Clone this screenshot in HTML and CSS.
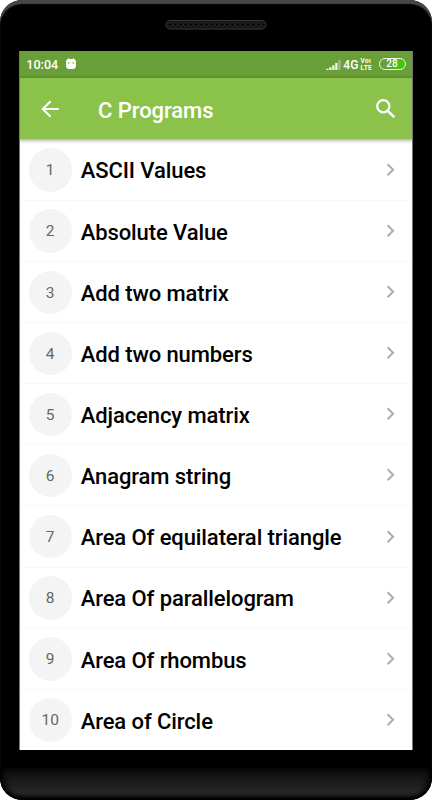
FILE: index.html
```
<!DOCTYPE html>
<html lang="en">
<head>
<meta charset="utf-8">
<title>C Programs</title>
<link rel="stylesheet" href="styles.css">
</head>
<body>
<div class="phone">
  <div class="top">
    <svg class="speaker" width="104" height="12" viewBox="0 0 104 12">
      <defs><pattern id="holes" x="3.5" y="3" width="5.2" height="6" patternUnits="userSpaceOnUse"><circle cx="2.6" cy="2.6" r="1.9" fill="#000" stroke="#303030" stroke-width=".8"/></pattern></defs>
      <rect x="2" y="1.5" width="100" height="8.5" rx="4.2" fill="#141414" stroke="#3a3a3a"/>
      <rect x="3.5" y="3" width="97" height="6" rx="3" fill="url(#holes)"/>
    </svg>
  </div>
  <main class="screen">
    <div class="status">
      <span class="time">10:04</span>
      <svg class="droid" width="12" height="13" viewBox="0 0 12 13">
        <path d="M3.3 1 4 3M8.7 1 8 3" stroke="#fff" stroke-width=".9"/>
        <path d="M1.1 4.5Q1.1 2 3.6 2h4.8q2.5 0 2.5 2.5v4.2q0 3.2-3.2 3.2H4.3q-3.2 0-3.2-3.2z" fill="#fff"/>
        <path d="M1.5 5.9h9" stroke="#d8e8c8" stroke-width=".5"/>
        <circle cx="3.8" cy="6" r=".7" fill="#689f38"/><circle cx="8.2" cy="6" r=".7" fill="#689f38"/>
      </svg>
      <svg class="signal" width="16" height="12" viewBox="0 0 16 12">
        <path d="M.2 9.7h2.3V11H.2zM3.2 8.3h2.3V11H3.2zM6.2 6.3h2.3V11H6.2zM9.2 4h2.3v7H9.2z" fill="#fff" fill-opacity=".9"/>
        <path d="M12.3.8h2.3V11h-2.3z" fill="#fff" fill-opacity=".35"/>
      </svg>
      <span class="network">4G</span>
      <span class="volte"><span>Voı</span><span>LTE</span></span>
      <span class="battery">28</span>
    </div>
    <header class="appbar">
      <svg class="back" width="20" height="20" viewBox="0 0 20 20"><path d="M18.8 10H3M10.6 2.2 2.8 10l7.8 7.8" fill="none" stroke="#fff" stroke-width="2.1"/></svg>
      <h1 class="title">C Programs</h1>
      <svg class="search" width="22" height="22" viewBox="0 0 22 22"><circle cx="8.3" cy="8.3" r="6.1" fill="none" stroke="#fff" stroke-width="2.2"/><path d="m12.8 12.8 6.4 6.4" stroke="#fff" stroke-width="2.6"/></svg>
    </header>
    <ul class="list">
      <li class="row"><span class="num">1</span><span class="name">ASCII Values</span><svg class="chev" viewBox="0 0 10 14"><path d="m1.6 1.3 5.5 5.5-5.5 5.5"/></svg></li>
      <li class="row"><span class="num">2</span><span class="name">Absolute Value</span><svg class="chev" viewBox="0 0 10 14"><path d="m1.6 1.3 5.5 5.5-5.5 5.5"/></svg></li>
      <li class="row"><span class="num">3</span><span class="name">Add two matrix</span><svg class="chev" viewBox="0 0 10 14"><path d="m1.6 1.3 5.5 5.5-5.5 5.5"/></svg></li>
      <li class="row"><span class="num">4</span><span class="name">Add two numbers</span><svg class="chev" viewBox="0 0 10 14"><path d="m1.6 1.3 5.5 5.5-5.5 5.5"/></svg></li>
      <li class="row"><span class="num">5</span><span class="name">Adjacency matrix</span><svg class="chev" viewBox="0 0 10 14"><path d="m1.6 1.3 5.5 5.5-5.5 5.5"/></svg></li>
      <li class="row"><span class="num">6</span><span class="name">Anagram string</span><svg class="chev" viewBox="0 0 10 14"><path d="m1.6 1.3 5.5 5.5-5.5 5.5"/></svg></li>
      <li class="row"><span class="num">7</span><span class="name">Area Of equilateral triangle</span><svg class="chev" viewBox="0 0 10 14"><path d="m1.6 1.3 5.5 5.5-5.5 5.5"/></svg></li>
      <li class="row"><span class="num">8</span><span class="name">Area Of parallelogram</span><svg class="chev" viewBox="0 0 10 14"><path d="m1.6 1.3 5.5 5.5-5.5 5.5"/></svg></li>
      <li class="row"><span class="num">9</span><span class="name">Area Of rhombus</span><svg class="chev" viewBox="0 0 10 14"><path d="m1.6 1.3 5.5 5.5-5.5 5.5"/></svg></li>
      <li class="row"><span class="num">10</span><span class="name">Area of Circle</span><svg class="chev" viewBox="0 0 10 14"><path d="m1.6 1.3 5.5 5.5-5.5 5.5"/></svg></li>
    </ul>
  </main>
  <div class="chin"></div>
</div>
</body>
</html>
```

FILE: styles.css
```
* { box-sizing: border-box; }
body { margin: 0; background: #fff; font-family: Roboto, "Liberation Sans", sans-serif; }
.phone {
  width: 432px; height: 800px; overflow: hidden;
  display: flex; flex-direction: column;
  background: #000; border-radius: 22px;
  box-shadow: inset 0 4px 1px #464646;
}
.top { height: 51px; flex: none; display: flex; justify-content: center; padding-top: 19px; }
.screen {
  height: 699px; flex: none; margin: 0 19px 0 19px; overflow: hidden;
  display: flex; flex-direction: column; background: #fff;
  border-left: 1px solid #777; border-right: 1px solid #777;
}
.status {
  height: 27px; flex: none; display: flex; align-items: center;
  padding: 0 7.5px 0 7.3px; margin: 0 -1px; background: #689f38; color: #fff;
}
.time { font-size: 12.6px; font-weight: 500; }
.droid { margin-left: 6.7px; margin-top: -2px; }
.signal { margin-left: auto; }
.network { font-size: 12px; font-weight: 500; margin-left: 1.5px; }
.volte {
  width: 13px; margin-left: 2.2px; display: flex; flex-direction: column;
  font-size: 6.6px; line-height: 7px; font-weight: 700; letter-spacing: .3px;
}
.battery {
  width: 27px; height: 12px; margin-left: 5px; margin-top: -1px; border: 1px solid #eef5e8; border-radius: 6px;
  background: linear-gradient(90deg, #689f38 30%, #48c40c 75%);
  font-size: 10px; line-height: 10px; font-weight: 500; text-align: center;
}
.appbar {
  height: 61px; flex: none; position: relative; z-index: 1;
  display: flex; align-items: center; padding: 0 16px 0 20.5px; margin: 0 -1px;
  background: #8bc34a; box-shadow: 0 1px 4px rgba(0,0,0,.45);
}
.title { margin: 4px 0 0 38.5px; color: #fff; font-size: 22px; line-height: 28px; font-weight: 500; letter-spacing: -.06px; }
.back { margin-top: 0; }
.search { margin-left: auto; margin-top: 1px; }
.list { list-style: none; margin: 0; padding: .6px 0 0; }
.row {
  height: 61.15px; display: flex; align-items: center; padding: 0 16px 0 8.5px;
  border-bottom: 1px solid #f8f8f8;
}
.num {
  width: 43.4px; height: 43.4px; flex: none; border-radius: 50%; background: #f4f4f4;
  color: #666; font-size: 15.5px; line-height: 45px; text-align: center; margin-top: .5px;
}
.name { margin-left: 8.8px; margin-top: 2.6px; font-size: 22px; font-weight: 500; letter-spacing: -.09px; color: #000; white-space: nowrap; }
.chev { width: 10px; height: 14px; margin-left: auto; flex: none; fill: none; stroke: #adadad; stroke-width: 2; }
.chin {
  flex: 1; margin-top: 18px; border-radius: 0 0 22px 22px;
  background: linear-gradient(#0c0c0c, #262626 75%, #1c1c1c);
  box-shadow: inset 0 -3px 3px #000, inset 5px 0 7px -2px #000, inset -5px 0 7px -2px #000;
}
```
